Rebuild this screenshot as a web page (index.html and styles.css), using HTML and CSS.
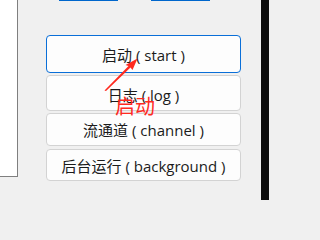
FILE: index.html
```html
<!DOCTYPE html>
<html lang="zh-CN">
<head>
<meta charset="utf-8">
<title>启动</title>
<link rel="stylesheet" href="styles.css">
</head>
<body>
<div class="window">
  <div class="main">
    <div class="side-pane"></div>
    <div class="content">
      <div class="links">
        <a class="link link-one" href="#">打开目录</a>
        <a class="link link-two" href="#">检查更新</a>
      </div>
      <div class="buttons">
        <button class="btn btn-default btn-start">启动 ( start )</button>
        <button class="btn btn-log">日志 ( log )</button>
        <button class="btn btn-channel">流通道 ( channel )</button>
        <button class="btn btn-bg">后台运行 ( background )</button>
      </div>
    </div>
  </div>
  <div class="edge"></div>

  <svg class="arrow" width="269" height="200" viewBox="0 0 269 200" aria-hidden="true">
    <path d="M104.5 90.5 L106 91 L130.5 67.5 L132.5 70 L137.5 58.5 L125.5 65 L128.5 66 Z" fill="#ff2a1f"/>
  </svg>
  <div class="note">启动</div>
</div>
</body>
</html>
```

FILE: styles.css
```css
html, body {
  margin: 0;
  padding: 0;
}

body {
  width: 269px;
  height: 200px;
  overflow: hidden;
  background: #f0f0f0;
  font-family: "Open Sans", "Noto Sans CJK SC", sans-serif;
  color: #1b1b1b;
}

.window {
  position: relative;
  display: flex;
  width: 269px;
  height: 200px;
}

.main {
  flex: 1;
  display: flex;
  align-items: flex-start;
  background: #f0f0f0;
}

.side-pane {
  width: 17px;
  height: 176px;
  background: #ffffff;
  border-right: 1px solid #7f7f7f;
  border-bottom: 1px solid #7f7f7f;
  flex: none;
}

.content {
  flex: 1;
  display: flex;
  flex-direction: column;
}

.links {
  display: flex;
  height: 20px;
  margin-top: -18px;
  padding-left: 41px;
  gap: 33px;
  font-size: 15px;
  line-height: 20px;
}

.link {
  color: #0066cc;
  text-decoration: underline;
  text-underline-offset: 2px;
  width: 59px;
  white-space: nowrap;
  overflow: hidden;
}

.buttons {
  display: flex;
  flex-direction: column;
  margin-top: 33px;
  margin-left: 28px;
  width: 195px;
}

.btn {
  box-sizing: border-box;
  display: flex;
  align-items: center;
  justify-content: center;
  width: 100%;
  padding: 0;
  background: #fdfdfd;
  border: 1px solid #d3d3d3;
  border-radius: 4px;
  font-family: "Open Sans", "Noto Sans CJK SC", sans-serif;
  font-size: 15px;
  color: #1b1b1b;
  white-space: nowrap;
}

.btn-default {
  border-color: #0a6fd8;
}

.btn-start {
  height: 38px;
  padding-top: 1px;
}

.btn-log {
  height: 36px;
  margin-top: 2px;
  padding-top: 3px;
}

.btn-channel {
  height: 33px;
  margin-top: 2px;
}

.btn-bg {
  height: 32px;
  margin-top: 3px;
}

.edge {
  width: 8px;
  height: 200px;
  background: #0c0c0c;
  flex: none;
}

.arrow {
  position: absolute;
  left: 0;
  top: 0;
  pointer-events: none;
}

.note {
  position: absolute;
  left: 115px;
  top: 93px;
  font-family: "Noto Sans CJK SC", sans-serif;
  font-size: 20px;
  line-height: 26px;
  color: #ff2a1f;
  pointer-events: none;
}
```
